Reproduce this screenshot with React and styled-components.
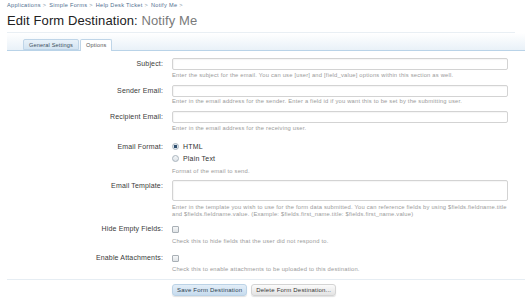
import styled, { createGlobalStyle } from "styled-components";

const GlobalStyle = createGlobalStyle`
	html, body {
		margin: 0;
		padding: 0;
		background: #ffffff;
	}
	body {
		font-family: "Liberation Sans", Arial, sans-serif;
		color: #333;
	}
`;

const crumbs = ["Applications", "Simple Forms", "Help Desk Ticket", "Notify Me"];

function App() {
	return (
		<Page>
			<GlobalStyle />
			<Breadcrumb>
				{crumbs.map((c) => (
					<Crumb key={c}>
						{c} <Arrow>&gt;</Arrow>
					</Crumb>
				))}
			</Breadcrumb>
			<Title>
				Edit Form Destination: <TitleItem>Notify Me</TitleItem>
			</Title>

			<TabBar>
				<Tab>General Settings</Tab>
				<Tab active>Options</Tab>
			</TabBar>

			<Form>
				<Row top={7}>
					<Label>Subject:</Label>
					<Field>
						<TextInput />
						<Hint>
							Enter the subject for the email. You can use [user] and
							[field_value] options within this section as well.
						</Hint>
					</Field>
				</Row>
				<Row>
					<Label>Sender Email:</Label>
					<Field>
						<TextInput />
						<Hint>
							Enter in the email address for the sender. Enter a field id if you
							want this to be set by the submitting user.
						</Hint>
					</Field>
				</Row>
				<Row>
					<Label>Recipient Email:</Label>
					<Field>
						<TextInput />
						<Hint>Enter in the email address for the receiving user.</Hint>
					</Field>
				</Row>
				<Row top={9}>
					<Label>Email Format:</Label>
					<Field>
						<Choice>
							<Radio checked />
							HTML
						</Choice>
						<Choice>
							<Radio />
							Plain Text
						</Choice>
						<Hint gap={3.5}>Format of the email to send.</Hint>
					</Field>
				</Row>
				<Row top={5}>
					<Label>Email Template:</Label>
					<Field>
						<TextArea />
						<Hint gap={3}>
							<Line>
								Enter in the template you wish to use for the form data submitted.
								You can reference fields by using $fields.fieldname.title
							</Line>
							<Line>
								and $fields.fieldname.value. (Example: $fields.first_name.title:
								$fields.first_name.value)
							</Line>
						</Hint>
					</Field>
				</Row>
				<Row top={5}>
					<Label>Hide Empty Fields:</Label>
					<Field>
						<Choice>
							<Checkbox />
						</Choice>
						<Hint gap={3}>Check this to hide fields that the user did not respond to.</Hint>
					</Field>
				</Row>
				<Row top={7}>
					<Label>Enable Attachments:</Label>
					<Field>
						<Choice>
							<Checkbox />
						</Choice>
						<Hint gap={2}>
							Check this to enable attachments to be uploaded to this destination.
						</Hint>
					</Field>
				</Row>

				<SubmitUnit>
					<Button primary>Save Form Destination</Button>
					<Button>Delete Form Destination...</Button>
				</SubmitUnit>
			</Form>
		</Page>
	);
}

export default App;

const Page = styled.div`
	box-sizing: border-box;
	width: 532px;
	height: 300px;
	padding: 2px 7px 0 7px;
	overflow: hidden;
`;

const Breadcrumb = styled.div`
	display: flex;
	gap: 3px;
	font-size: 5.6px;
	letter-spacing: 0.3px;
	line-height: 7px;
	color: #4f6f8f;
`;

const Crumb = styled.span`
	white-space: nowrap;
`;

const Arrow = styled.span`
	color: #8a9aaa;
`;

const Title = styled.h1`
	margin: 4px 10px 0 0;
	padding-bottom: 3px;
	font-size: 13px;
	letter-spacing: 0.1px;
	line-height: 16px;
	font-weight: normal;
	color: #222;
	border-bottom: 1px solid #e9eff4;
`;

const TitleItem = styled.span`
	color: #7a7a7a;
`;

const TabBar = styled.div`
	display: flex;
	align-items: flex-end;
	gap: 1px;
	height: 17px;
	padding-left: 16px;
	background: linear-gradient(to bottom, #ffffff 0%, #e9f1f8 100%);
	border-bottom: 1px solid #b9d3e8;
`;

const Tab = styled.div`
	box-sizing: border-box;
	height: ${(p) => (p.active ? "12px" : "11px")};
	margin-bottom: ${(p) => (p.active ? "-1px" : "0")};
	padding: 0 5px;
	font-size: 5.6px;
	letter-spacing: 0.15px;
	line-height: 10px;
	color: ${(p) => (p.active ? "#555" : "#3d4f60")};
	border: 1px solid #bfd5e8;
	border-bottom: ${(p) => (p.active ? "none" : "1px solid #bfd5e8")};
	border-radius: 2px 2px 0 0;
	background: ${(p) =>
		p.active ? "#ffffff" : "linear-gradient(to bottom, #e8f1f9, #d3e4f2)"};
`;

const Form = styled.div`
	display: flex;
	flex-direction: column;
`;

const Row = styled.div`
	display: grid;
	grid-template-columns: 156px 1fr;
	column-gap: 9px;
	padding: ${(p) => p.top ?? 6}px 17px 0 0;
`;

const Label = styled.div`
	text-align: right;
	font-size: 7px;
	letter-spacing: 0.15px;
	line-height: 12px;
	color: #3a3a3a;
`;

const Field = styled.div`
	display: flex;
	flex-direction: column;
`;

const TextInput = styled.div`
	box-sizing: border-box;
	height: 12px;
	border: 1px solid #d3d3d3;
	border-radius: 2px;
	background: #fff;
	box-shadow: inset 1px 1px 1px rgba(0, 0, 0, 0.04);
`;

const TextArea = styled(TextInput)`
	height: 21px;
`;

const Hint = styled.div`
	margin-top: ${(p) => p.gap ?? 1.5}px;
	font-size: 5.8px;
	letter-spacing: 0.2px;
	line-height: 7px;
	color: #9a9a9a;
`;

const Line = styled.div`
	white-space: nowrap;
`;

const Choice = styled.div`
	display: flex;
	align-items: center;
	gap: 4px;
	height: 12px;
	font-size: 7px;
	letter-spacing: 0.2px;
	color: #333;
`;

const Radio = styled.span`
	box-sizing: border-box;
	width: 7px;
	height: 7px;
	border-radius: 50%;
	border: 1px solid #a9b4bd;
	background: ${(p) =>
		p.checked
			? "radial-gradient(circle, #2f4f6f 0 1.6px, #dfe7ee 2px)"
			: "linear-gradient(#f4f6f8, #dde3e8)"};
`;

const Checkbox = styled.span`
	box-sizing: border-box;
	width: 7px;
	height: 7px;
	border: 1px solid #a9b0b6;
	border-radius: 1px;
	background: linear-gradient(#f6f7f8, #dfe3e6);
`;

const SubmitUnit = styled.div`
	display: flex;
	gap: 4px;
	margin-top: 6px;
	padding: 4px 0 0 165px;
	border-top: 1px solid #e6edf3;
`;

const Button = styled.div`
	box-sizing: border-box;
	height: 12px;
	padding: 0 4px;
	font-size: 6px;
	letter-spacing: 0.2px;
	line-height: 11px;
	color: ${(p) => (p.primary ? "#2c3e50" : "#333")};
	border: 1px solid ${(p) => (p.primary ? "#bcd3e6" : "#d4d4d4")};
	border-radius: 3px;
	background: ${(p) =>
		p.primary
			? "linear-gradient(to bottom, #e3eef8, #c6dbee)"
			: "linear-gradient(to bottom, #fbfbfb, #e3e3e3)"};
	box-shadow: 0 1px 1px rgba(0, 0, 0, 0.12);
	white-space: nowrap;
`;
